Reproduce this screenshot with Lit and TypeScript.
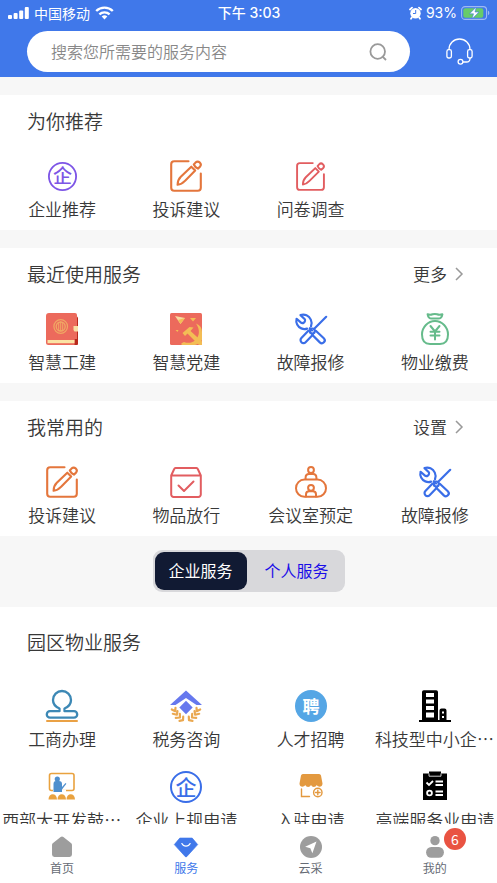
import { LitElement, html, css, svg, nothing, TemplateResult } from "lit";
import { customElement, property, state } from "lit/decorators.js";
import { classMap } from "lit/directives/class-map.js";

const ICONS: Record<string, TemplateResult> = {
  company: svg`
    <circle cx="16" cy="16" r="15" fill="none" stroke="currentColor" stroke-width="2"/>
    <text class="glyph" x="16" y="23.500" font-size="21" font-weight="500" text-anchor="middle" fill="currentColor">企</text>`,
  pencil: svg`
    <g fill="none" stroke="currentColor" stroke-width="2.100" stroke-linejoin="round" stroke-linecap="round">
      <path d="M18.500 1.200H4.200a3 3 0 0 0-3 3v23.600a3 3 0 0 0 3 3h23.600a3 3 0 0 0 3-3V13.500"/>
      <path d="M7.600 24.800c0-3.800.8-5.600 3.200-8L21.300 6.700l3.900 3.900-10.300 10.300c-2.200 2.400-3.800 3.600-7.300 3.900z"/>
      <path d="M23.800 4.500l1.700-1.900a3 3 0 0 1 4.300 4.300l-1.900 1.700c-1.800-.8-3.300-2.300-4.100-4.100z"/>
    </g>`,
  book: svg`
    <path d="M29 1.500l3 3V31a1 1 0 0 1-1 1h-3z" fill="#b8291b"/>
    <path d="M3 0h26a2 2 0 0 1 2 2v24h-2.500v6H2.500A2.500 2.500 0 0 1 0 29.500V3a3 3 0 0 1 3-3z" fill="#ec6a5c"/>
    <path d="M1.500 27h27v3.200h-27z" fill="#fbe3a4"/>
    <path d="M27.500 13H32v5.500h-3.500l-1-1.500z" fill="#f9dfa3"/>
    <g fill="none" stroke="#f0a864">
      <circle cx="14.700" cy="13.500" r="6.800" stroke-width="1.200"/>
      <circle cx="14.700" cy="13.500" r="4.500" stroke-width="1.300"/>
      <path d="M14.700 8.500v10M12.700 10v7M16.700 10v7" stroke-width="1"/>
    </g>`,
  party: svg`
    <rect width="32" height="32" rx="1.500" fill="#ec6a5c"/>
    <g fill="#f3bd55">
      <path d="M5 3l10 2-4.500 6z" fill="#f8d9a0"/><path d="M10.500 11L15 5l-7 2z"/>
      <path d="M20 5h6l-3 3.500z"/><path d="M5.500 17h3l-1 2z"/>
      <path d="M12.500 20l7-6 4 .5-3 3.500L32 28.500V32h-3L17.500 20.500l-2.500 2.500z"/>
      <path d="M26 10.500c4 1.500 6 4.500 6 8.500v8c-2 2.500-4 4.500-7 5H12c-1-.5-1-1.500 0-2l2-1c4 1.500 8 1 11-1.500 4.500-4 5.500-10.500 1-17z"/>
    </g>`,
  repair: svg`
    <g fill="none" stroke="currentColor" stroke-width="2.200" stroke-linecap="round" stroke-linejoin="round">
      <path d="M14.800 15.200L17 17.500M16 13.300c.8-1.800.8-4.600-.2-6.700-1.800-4-6.200-5.800-10.300-4.500l4.300 4.100c.5.500.3 2.800-.8 3.300-1.200.9-2.300.8-3 .2L1.600 5.800C.5 9.900 2.600 14 6.300 15.400c2 .8 4.200.8 5.800.2"/>
      <path d="M31.200 3.800L19 16"/>
      <path d="M20.800 17.800l8 7.400a2.900 2.900 0 0 1-4 4.200l-7.600-7.600"/>
      <path d="M13.600 17.600l-7.200 7.400a2.900 2.900 0 0 0 4.200 4.200l7.200-7.400"/>
      <circle cx="17.300" cy="18" r="2.500"/>
    </g>`,
  money: svg`
    <g fill="none" stroke="currentColor" stroke-width="2" stroke-linecap="round" stroke-linejoin="round">
      <path d="M8.600 1.300c2 .8 3 .8 5 0 1.600-.6 2.800-.6 4.400 0 2 .8 3.200.8 5.400 0-.5 3-1.900 4.200-4.100 4.200h-6.600c-2.200 0-3.600-1.200-4.100-4.200z"/>
      <path d="M16 8C9 8 3 14 3 21.500c0 6 3 9.500 8 9.500h10c5 0 8-3.500 8-9.500C29 14 23 8 16 8z"/>
      <path d="M11.500 13l4.500 5.500 4.500-5.500M16 18.500v8M11.500 18.700h9M11.500 22.500h9"/>
    </g>`,
  box: svg`
    <g fill="none" stroke="currentColor" stroke-width="2" stroke-linejoin="round" stroke-linecap="round">
      <path d="M1.200 9.500L4.200 3a1.500 1.500 0 0 1 1.300-.9h21a1.500 1.500 0 0 1 1.300.9l3 6.500v19a2.400 2.400 0 0 1-2.400 2.400H3.600a2.400 2.400 0 0 1-2.400-2.400zM1.500 9.500h29"/>
      <path d="M8.500 19.500l5.500 5.500 9.500-9.500"/>
    </g>`,
  meeting: svg`
    <g fill="none" stroke="currentColor" stroke-width="2" stroke-linecap="round">
      <circle cx="16" cy="4" r="2.900"/><circle cx="16" cy="21.800" r="2.900"/>
      <path d="M10.600 13v-1.500c0-2.500 1-3.600 3.400-3.600h4c2.400 0 3.400 1.100 3.400 3.600V13"/>
      <path d="M9.500 13.600h13A8.500 8.500 0 0 1 31 22.200a8.500 8.500 0 0 1-8.500 8.600h-13A8.500 8.500 0 0 1 1 22.200a8.500 8.500 0 0 1 8.500-8.600z"/>
      <path d="M11 30.500v-2c0-2.300 1-3.200 3.200-3.200h3.600c2.200 0 3.200.9 3.200 3.200v2"/>
    </g>`,
  stamp: svg`
    <path d="M13.500 18.500C9.800 17 7 14 7 10a9 9 0 0 1 18 0c0 4-2.800 7-6.500 8.500v2.700H28a3.200 3.200 0 0 1 0 6.400H4a3.200 3.200 0 0 1 0-6.400h9.500z" fill="none" stroke="#3c88b5" stroke-width="2.300" stroke-linejoin="round"/>
    <rect x="0" y="30" width="32" height="2" rx="1" fill="#eaa145"/>`,
  tax: svg`
    <path d="M16 .5l16 14.500h-5.500L16 8 5.500 15H0z" fill="#6678ee"/>
    <path d="M16 10.800l6.700 6.700L16 24.200l-6.700-6.700z" fill="#6678ee"/>
    <g fill="none" stroke="#eaa850" stroke-width="2.200" stroke-linecap="round" stroke-linejoin="round">
      <path d="M1.800 19.500l3.400 1.700.3-3.400M2.800 23.800l4 .9.700-3.700M5.800 27.800l4.200-.3-.2-3.700M9.500 30.800l3.500-.6.200-3.500"/>
      <path d="M30.200 19.500l-3.400 1.700-.3-3.400M29.200 23.800l-4 .9-.7-3.700M26.200 27.800l-4.200-.3.200-3.700M22.500 30.800l-3.500-.6-.2-3.500"/>
    </g>`,
  hire: svg`
    <circle cx="16" cy="16" r="16" fill="#55a6e5"/>
    <text class="glyph" x="16" y="22.500" font-size="17" font-weight="700" text-anchor="middle" fill="#fff">聘</text>`,
  building: svg`
    <path d="M3 30V2a1.800 1.800 0 0 1 1.800-1.800h12.400A1.800 1.800 0 0 1 19 2v28h1.500V20.500a2 2 0 0 1 2-2h3a2 2 0 0 1 2 2V30H32v2H0v-2z" fill="#000"/>
    <path d="M7 3h8v4H7zM7 9.500h8v4H7zM7 16h8v4H7zM7 22.500h8v5H7zM23 21.500h2v2h-2zM23 26h2v2h-2z" fill="#fff"/>`,
  lecture: svg`
    <rect x="3.500" y="2.500" width="24.500" height="17" rx="2" fill="none" stroke="#e9a23f" stroke-width="1.600"/>
    <path d="M7 18.500h13v2.500H7z" fill="#fff"/>
    <g fill="#4f8fcd"><circle cx="11.300" cy="8" r="2.600"/><path d="M10 10h3c2 0 3 1 3 3v3l3.500-4 .9.8-4.400 5.700V21H7.500v-8c0-2 .9-3 2.500-3z"/></g>
    <g fill="#e9a23f"><path d="M2.500 28.500c0-7 8.500-7 8.500 0zM11.500 28.500c0-7 8.500-7 8.500 0zM20.500 28.500c0-7 8.500-7 8.500 0z"/></g>`,
  shop: svg`
    <path d="M8 3h16a2 2 0 0 1 2 1.500l1.500 8c0 4-4.500 4-5.700 1.500-1.300 2.500-4.600 2.500-5.800 0-1.200 2.500-4.500 2.500-5.800 0C9 16.500 4.500 16.500 4.500 12.500l1.500-8A2 2 0 0 1 8 3z" fill="#e3993f"/>
    <g fill="none" stroke="#e3993f" stroke-width="1.400" stroke-linecap="round">
      <path d="M6.500 18v7.500h8"/><circle cx="22.800" cy="21.500" r="4.200"/><path d="M20.500 21.500h4.600M22.800 19.200v4.600"/>
    </g>`,
  checklist: svg`
    <path d="M4 2.500h6V.5h12v2h6V29H4z" fill="#000"/>
    <g fill="none" stroke="#fff" stroke-width="1.800"><path d="M10 2.500v2.700h12V2.500" stroke-width=".8"/><path d="M7.500 11.500l2.500 2.500 4-4M16.500 10.500H24M16.500 14H24M16.500 20.500H24M16.500 24H24"/><circle cx="10.500" cy="22" r="2.400"/></g>`,
  home: svg`<path d="M14 1.500a3 3 0 0 1 4 0l11 8.500a3.500 3.500 0 0 1 1.500 2.800V27a3.500 3.500 0 0 1-3.500 3.500H5A3.500 3.500 0 0 1 1.500 27V12.800A3.500 3.500 0 0 1 3 10z" fill="currentColor"/>`,
  gem: svg`<path d="M7 3h18L33 12.500 17 30a1.500 1.500 0 0 1-2 0L-1 12.500z" fill="currentColor" stroke="currentColor" stroke-linejoin="round"/><path d="M10 11c2.500 5 9.500 5 12 0" fill="none" stroke="#fff" stroke-width="1.800" stroke-linecap="round"/>`,
  compass: svg`<circle cx="16" cy="16" r="16" fill="currentColor"/><path d="M24 8L7.500 15.500l7.500 2.300L18 25z" fill="#fff"/>`,
  person: svg`<circle cx="16" cy="6.800" r="6.800" fill="currentColor"/><rect x="3" y="16" width="26" height="15.500" rx="7.500" fill="currentColor"/>`,
};

@customElement("app-icon")
class AppIcon extends LitElement {
  @property() name = "";
  static styles = css`
    :host { display: block; width: 32px; height: 32px; }
    svg { display: block; width: 100%; height: 100%; overflow: visible; }
    .glyph { font-family: "Noto Sans CJK SC", sans-serif; }
  `;
  render() {
    return html`<svg viewBox="0 0 32 32" aria-hidden="true">${ICONS[this.name]}</svg>`;
  }
}

interface Service { icon: string; label: string; tone?: string; small?: boolean; }

@customElement("service-section")
class ServiceSection extends LitElement {
  @property() heading = "";
  @property() more = "";
  @property({ type: Boolean, reflect: true }) roomy = false;
  @property({ attribute: false }) items: Service[] = [];
  static styles = css`
    :host { display: block; background: #fff; padding: 13px 0 9px; color: #383838; }
    :host([roomy]) { padding-top: 22px; }
    header { display: flex; justify-content: space-between; align-items: center; height: 26px; padding: 0 30px 0 27px; }
    h2 { margin: 0; font-size: 19px; line-height: 26px; font-weight: inherit; }
    a { color: inherit; text-decoration: none; }
    .more { display: flex; align-items: center; gap: 4px; font-size: 17px; line-height: 24px; }
    .chevron { display: block; width: 16px; height: 16px; color: #999; }
    .grid { display: grid; grid-template-columns: repeat(4, minmax(0, 1fr)); row-gap: 20px; margin-top: 26px; }
    :host([roomy]) .grid { margin-top: 35px; }
    .item { display: flex; flex-direction: column; align-items: center; gap: 5px; font-size: 17px; line-height: 24px; }
    .icon { display: grid; place-items: center; width: 32px; height: 32px; }
    .small { width: 29px; height: 29px; }
    .label { max-width: 120px; overflow: hidden; text-overflow: ellipsis; white-space: nowrap; }
    .purple { color: #7d55e6; }
    .orange { color: #e4763c; }
    .red { color: #e25d60; }
    .blue { color: #3a6ee8; }
    .green { color: #66bb8b; }
  `;
  render() {
    return html`
      <header>
        <h2>${this.heading}</h2>
        ${this.more ? html`
          <a class="more" href="#">${this.more}
            <svg class="chevron" viewBox="0 0 16 16" aria-hidden="true"><path d="M5 2l6 6-6 6" fill="none" stroke="currentColor" stroke-width="1.500"/></svg>
          </a>` : nothing}
      </header>
      <div class="grid">
        ${this.items.map((s) => html`
          <a class="item" href="#">
            <span class="icon ${s.tone ?? ""}"><app-icon class=${classMap({ small: !!s.small })} name=${s.icon}></app-icon></span>
            <span class="label">${s.label}</span>
          </a>`)}
      </div>`;
  }
}

const repair: Service = { icon: "repair", label: "故障报修", tone: "blue" };
const advice: Service = { icon: "pencil", label: "投诉建议", tone: "orange" };

const RECOMMENDED: Service[] = [
  { icon: "company", label: "企业推荐", tone: "purple", small: true },
  advice,
  { icon: "pencil", label: "问卷调查", tone: "red", small: true },
];
const RECENT: Service[] = [
  { icon: "book", label: "智慧工建" },
  { icon: "party", label: "智慧党建" },
  repair,
  { icon: "money", label: "物业缴费", tone: "green" },
];
const FREQUENT: Service[] = [
  advice,
  { icon: "box", label: "物品放行", tone: "red" },
  { icon: "meeting", label: "会议室预定", tone: "orange" },
  repair,
];
const PARK: Service[] = [
  { icon: "stamp", label: "工商办理" },
  { icon: "tax", label: "税务咨询" },
  { icon: "hire", label: "人才招聘" },
  { icon: "building", label: "科技型中小企业申请" },
  { icon: "lecture", label: "西部大开发鼓励类申请" },
  { icon: "company", label: "企业上规申请", tone: "blue" },
  { icon: "shop", label: "入驻申请" },
  { icon: "checklist", label: "高端服务业申请" },
];
const TABS = [
  { icon: "home", label: "首页", badge: 0 },
  { icon: "gem", label: "服务", badge: 0 },
  { icon: "compass", label: "云采", badge: 0 },
  { icon: "person", label: "我的", badge: 6 },
];

@customElement("app-root")
class AppRoot extends LitElement {
  @state() private audience = 0;
  @state() private tab = 1;

  static styles = css`
    :host {
      display: flex; flex-direction: column; height: 100vh; background: #f7f7f7;
      font-family: "Noto Sans CJK SC", sans-serif; font-weight: 350; color: #383838;
    }
    .top { flex: none; background: #4078ea; color: #fff; }
    .status { display: grid; grid-template-columns: 1fr auto 1fr; align-items: center; height: 25px; padding: 0 7px 0 8px; font-size: 14px; line-height: 20px; font-weight: 400; }
    .status div { display: flex; align-items: center; gap: 5px; }
    .status svg { display: block; flex: none; }
    .time { font-family: Inter, "Noto Sans CJK SC", sans-serif; font-weight: 500; }
    .status .power { justify-content: flex-end; gap: 4px; font-family: Inter, sans-serif; }
    .bar { display: flex; align-items: center; gap: 36px; padding: 6px 24px 5px 27px; }
    .search { flex: 1; display: flex; align-items: center; box-sizing: border-box; height: 41px; padding: 0 23px 0 24px; background: #fff; border-radius: 21px; }
    input { flex: 1; min-width: 0; border: 0; padding: 0 0 2px; outline: 0; background: none; font: inherit; font-size: 16px; line-height: 24px; color: #383838; }
    input::placeholder { color: #888; opacity: 1; }
    button { border: 0; padding: 0; background: none; font: inherit; color: inherit; cursor: pointer; }
    button svg { display: block; }
    main { flex: 1; min-height: 0; overflow-y: auto; scrollbar-width: none; padding-top: 18px; }
    .stack { display: grid; gap: 18px; }
    .switch { display: flex; justify-content: center; padding: 14px 0 15px; }
    .track { display: flex; gap: 4px; padding: 2px; background: #d8d8db; border-radius: 9px; }
    .track button { width: 92px; height: 38px; padding-bottom: 2px; border-radius: 9px; font-size: 16px; line-height: 24px; font-weight: 400; color: #1a0de8; }
    .track .on { background: #111a33; color: #fff; }
    nav { flex: none; display: grid; grid-template-columns: repeat(4, 1fr); height: 59px; background: #fff; }
    .tab { display: flex; flex-direction: column; align-items: center; gap: 1px; padding-top: 12px; font-size: 12px; line-height: 18px; font-weight: 400; color: #666b75; }
    .mark { position: relative; color: #9d9d9d; }
    .mark app-icon { width: 22px; height: 22px; }
    .tab.current, .current .mark { color: #4078ea; }
    .badge { position: absolute; left: 20px; top: -8px; width: 22px; height: 22px; border-radius: 11px; background: #e95342; color: #fff; font-size: 14px; line-height: 22px; }
  `;

  render() {
    return html`
      <div class="top">
        <div class="status">
          <div>
            <svg width="21" height="12" viewBox="0 0 21 12" fill="#fff"><rect x="0" y="8" width="4" height="4" rx="1"/><rect x="5.600" y="6" width="4" height="6" rx="1"/><rect x="11.200" y="3.500" width="4" height="8.500" rx="1"/><rect x="16.800" y="0" width="4" height="12" rx="1"/></svg>
            <span>中国移动</span>
            <svg width="19" height="14" viewBox="0 0 19 14" fill="none" stroke="#fff" stroke-width="2.400"><path d="M1.200 5a12 12 0 0 1 16.600 0M4.400 8.400a7.400 7.400 0 0 1 10.200 0"/><path d="M6.700 10.600a4 4 0 0 1 5.600 0L9.500 13.500z" fill="#fff" stroke="none"/></svg>
          </div>
          <span class="time">下午 3:03</span>
          <div class="power">
            <svg width="13" height="14" viewBox="0 0 13 14"><circle cx="6.500" cy="7.200" r="5.200" fill="#fff"/><path d="M1 3.500L3 1.700M12 3.500L10 1.700M2.800 11.500L2 12.700M10.200 11.500l.8 1.200" stroke="#fff" stroke-width="1.800" stroke-linecap="round"/><path d="M6.700 4v3.500H4" fill="none" stroke="#4078ea"/></svg>
            <span>93%</span>
            <svg width="29" height="14" viewBox="0 0 29 14"><rect x=".6" y=".6" width="25" height="12.800" rx="3.500" fill="none" stroke="#9fbaf3" stroke-width="1.100"/><rect x="2.300" y="2.300" width="20" height="9.400" rx="2" fill="#67cc69"/><path d="M27 4.800c1.800.6 1.800 3.800 0 4.400z" fill="#9fbaf3"/><path d="M15.300 1L8.500 7.800h4L11 13l7-7h-4z" fill="#fff" stroke="#4078ea" stroke-width=".6"/></svg>
          </div>
        </div>
        <div class="bar">
          <div class="search">
            <input type="text" aria-label="搜索" placeholder="搜索您所需要的服务内容" />
            <button aria-label="搜索"><svg width="18" height="18" viewBox="0 0 18 18" fill="none" stroke="#999" stroke-width="1.800"><circle cx="8.700" cy="8.500" r="7.300"/><path d="M13.300 13.300l3.700 3.700"/></svg></button>
          </div>
          <button aria-label="客服"><svg width="27" height="27" viewBox="0 0 27 27" fill="none" stroke="#fff" stroke-width="1.300"><path d="M3 12v-.5a10.500 10.500 0 0 1 21 0v.5M24 20v.5c0 2-1.500 3.500-3.500 3.500H17"/><rect x=".9" y="11.700" width="4.500" height="8.300" rx="1.800"/><rect x="21.600" y="11.700" width="4.500" height="8.300" rx="1.800"/><circle cx="14.500" cy="23.800" r="2.400"/></svg></button>
        </div>
      </div>
      <main>
        <div class="stack">
          <service-section heading="为你推荐" .items=${RECOMMENDED}></service-section>
          <service-section heading="最近使用服务" more="更多" .items=${RECENT}></service-section>
          <service-section heading="我常用的" more="设置" .items=${FREQUENT}></service-section>
        </div>
        <div class="switch">
          <div class="track">
            ${["企业服务", "个人服务"].map((t, i) => html`
              <button class=${classMap({ on: this.audience === i })} aria-pressed=${this.audience === i} @click=${() => (this.audience = i)}>${t}</button>`)}
          </div>
        </div>
        <service-section roomy heading="园区物业服务" .items=${PARK}></service-section>
      </main>
      <nav>
        ${TABS.map((t, i) => html`
          <button class=${classMap({ tab: true, current: this.tab === i })} @click=${() => (this.tab = i)}>
            <span class="mark"><app-icon name=${t.icon}></app-icon>${t.badge ? html`<span class="badge">${t.badge}</span>` : nothing}</span>
            <span>${t.label}</span>
          </button>`)}
      </nav>`;
  }
}
